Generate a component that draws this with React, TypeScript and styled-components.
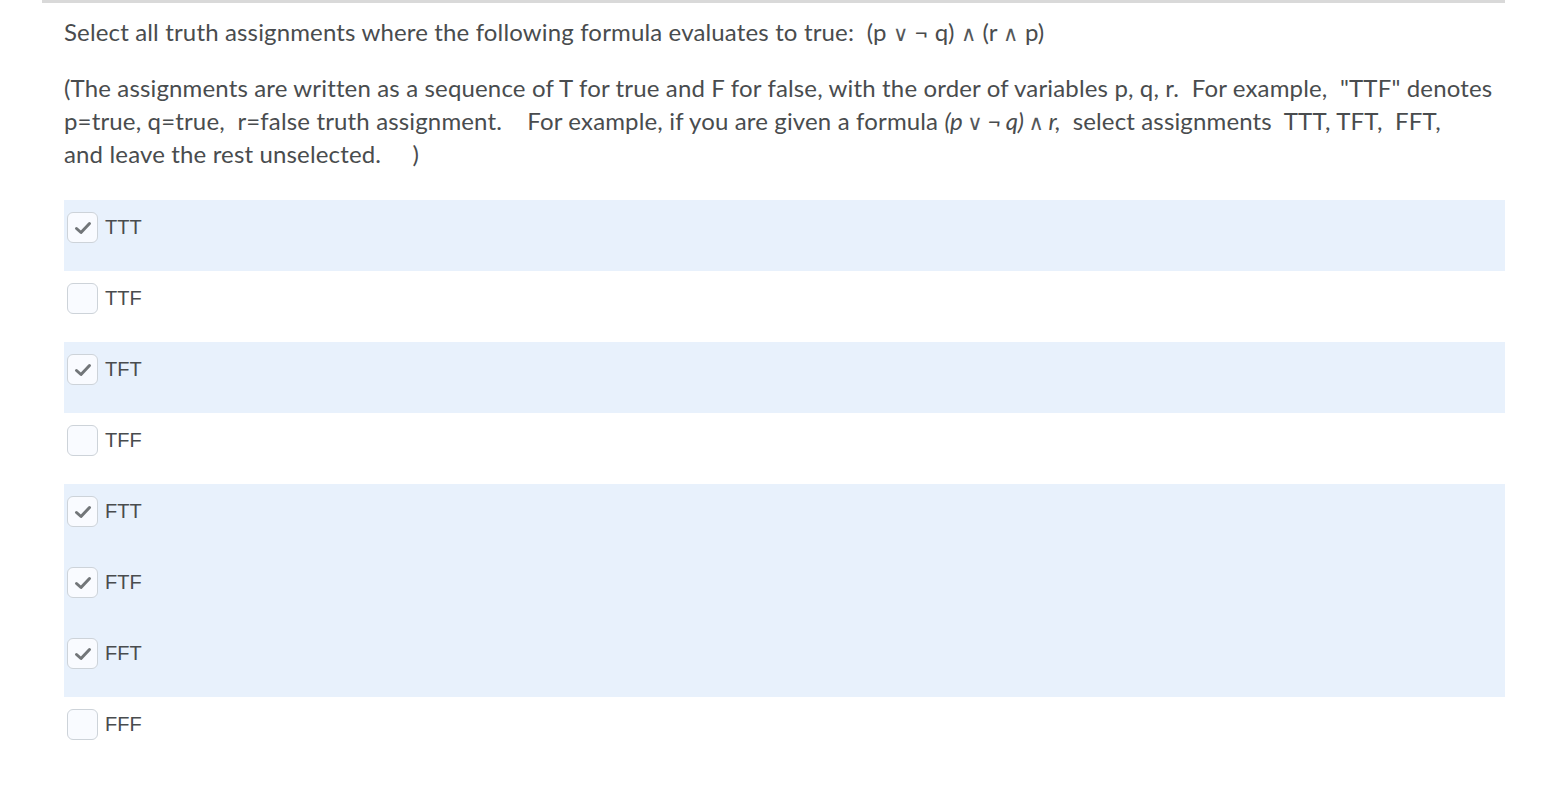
import styled, { createGlobalStyle } from "styled-components";

const GlobalStyle = createGlobalStyle`
  body {
    margin: 0;
    background: #ffffff;
    font-family: Lato, "Open Sans", sans-serif;
  }
`;

const Question = styled.div`
  margin-left: 42px;
  width: 1463px;
  border-top: 3px solid #d9d9d9;
  padding: 12px 0 40px 22px;
  box-sizing: border-box;
  color: #494c4e;
`;

const Text = styled.p<{ $gap?: number }>`
  margin: 0 0 ${(p) => p.$gap ?? 0}px 0;
  font-family: Lato, "Open Sans", sans-serif;
  font-size: 24px;
  line-height: 33px;
  letter-spacing: 0.15px;
`;

const Spaces = styled.span`
  white-space: pre;
`;

// logic symbols in the reference are thin and a bit smaller than the text
const Op = styled.span`
  font-family: "DejaVu Sans ExtraLight", "DejaVu Sans", sans-serif;
  font-weight: 200;
  font-size: 21px;
  line-height: 0;
  color: #55585a;
`;

const Formula = styled.em`
  font-style: italic;
  letter-spacing: -0.5px;
`;

const Options = styled.div`
  display: flex;
  flex-direction: column;
`;

const Row = styled.label<{ $shaded: boolean }>`
  display: flex;
  align-items: center;
  align-content: flex-start;
  flex-wrap: wrap;
  gap: 7px;
  height: 71px;
  box-sizing: border-box;
  padding: 12px 0 0 3px;
  background: ${(p) => (p.$shaded ? "#e8f1fc" : "#ffffff")};
`;

const Box = styled.span`
  display: flex;
  align-items: center;
  justify-content: center;
  width: 29px;
  height: 29px;
  border: 1px solid #cdd3d9;
  border-radius: 6px;
  background: #f9fbff;
`;

const OptionText = styled.span`
  font-family: "Liberation Sans", Arial, sans-serif;
  font-size: 20px;
  color: #494c4e;
`;

const Check = () => (
  <svg width="22" height="22" viewBox="0 0 22 22">
    <polyline
      points="4.5,11.5 9,15.5 17.5,6.5"
      fill="none"
      stroke="#727679"
      strokeWidth="3"
      strokeLinecap="round"
      strokeLinejoin="round"
    />
  </svg>
);

const options = [
  { label: "TTT", checked: true },
  { label: "TTF", checked: false },
  { label: "TFT", checked: true },
  { label: "TFF", checked: false },
  { label: "FTT", checked: true },
  { label: "FTF", checked: true },
  { label: "FFT", checked: true },
  { label: "FFF", checked: false },
];

export default function App() {
  return (
    <>
      <GlobalStyle />
      <Question>
        <Text $gap={23}>
          Select all truth assignments where the following formula evaluates to true:
          <Spaces>{"  "}</Spaces>(p <Op>∨</Op> ¬ q) <Op>∧</Op> (r <Op>∧</Op> p)
        </Text>
        <Text $gap={30}>
          (The assignments are written as a sequence of T for true and F for false, with the order
          of variables p, q, r.<Spaces>{"  "}</Spaces>For example,<Spaces>{"  "}</Spaces>"TTF"
          denotes p=true, q=true,<Spaces>{"  "}</Spaces>r=false truth assignment.
          <Spaces>{"    "}</Spaces>For example, if you are given a formula{" "}
          <Formula>
            (p <Op>∨</Op> ¬ q) <Op>∧</Op> r,
          </Formula>
          <Spaces>{"  "}</Spaces>select assignments<Spaces>{"  "}</Spaces>TTT, TFT,
          <Spaces>{"  "}</Spaces>FFT,
          <br />
          and leave the rest unselected.<Spaces>{"     "}</Spaces>)
        </Text>
        <Options>
          {options.map((o) => (
            <Row key={o.label} $shaded={o.checked}>
              <Box>{o.checked && <Check />}</Box>
              <OptionText>{o.label}</OptionText>
            </Row>
          ))}
        </Options>
      </Question>
    </>
  );
}
